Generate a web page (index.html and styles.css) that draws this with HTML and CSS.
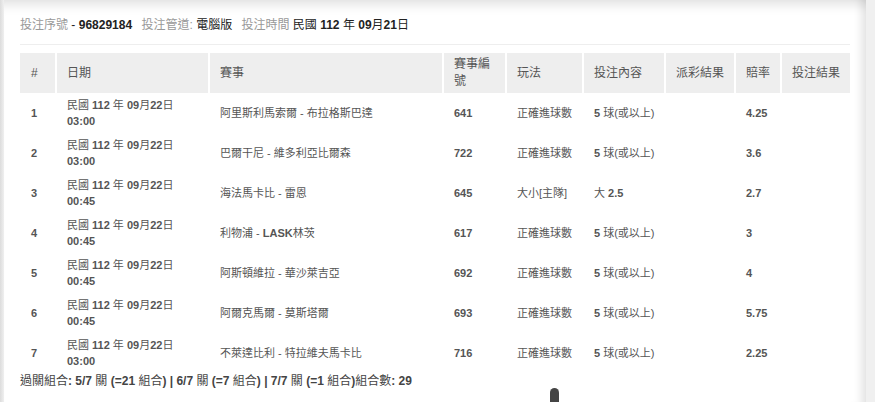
FILE: index.html
```html
<!DOCTYPE html>
<html lang="zh-Hant">
<head>
<meta charset="utf-8">
<title>投注明細</title>
<link rel="stylesheet" href="styles.css">
</head>
<body>
<div class="panel">
  <div class="info">
    <span class="lbl">投注序號</span> <span class="val">- <b>96829184</b></span>
    <span class="lbl">投注管道:</span> <span class="val">電腦版</span>
    <span class="lbl">投注時間</span> <span class="val">民國 <b>112</b> 年 <b>09</b>月<b>21</b>日</span>
  </div>
  <table class="bets">
    <colgroup>
      <col class="c-no"><col class="c-date"><col class="c-match"><col class="c-id"><col class="c-play"><col class="c-content"><col class="c-pay"><col class="c-odds"><col class="c-result">
    </colgroup>
    <thead>
      <tr><th>#</th><th>日期</th><th>賽事</th><th>賽事編號</th><th>玩法</th><th>投注內容</th><th>派彩結果</th><th>賠率</th><th>投注結果</th></tr>
    </thead>
    <tbody>
      <tr><td><b>1</b></td><td>民國 <b>112</b> 年 <b>09</b>月<b>22</b>日<br><b>03:00</b></td><td>阿里斯利馬索爾 - 布拉格斯巴達</td><td><b>641</b></td><td>正確進球數</td><td><b>5</b> 球(或以上)</td><td></td><td><b>4.25</b></td><td></td></tr>
      <tr><td><b>2</b></td><td>民國 <b>112</b> 年 <b>09</b>月<b>22</b>日<br><b>03:00</b></td><td>巴爾干尼 - 維多利亞比爾森</td><td><b>722</b></td><td>正確進球數</td><td><b>5</b> 球(或以上)</td><td></td><td><b>3.6</b></td><td></td></tr>
      <tr><td><b>3</b></td><td>民國 <b>112</b> 年 <b>09</b>月<b>22</b>日<br><b>00:45</b></td><td>海法馬卡比 - 雷恩</td><td><b>645</b></td><td>大小[主隊]</td><td>大 <b>2.5</b></td><td></td><td><b>2.7</b></td><td></td></tr>
      <tr><td><b>4</b></td><td>民國 <b>112</b> 年 <b>09</b>月<b>22</b>日<br><b>00:45</b></td><td>利物浦 - <b>LASK</b>林茨</td><td><b>617</b></td><td>正確進球數</td><td><b>5</b> 球(或以上)</td><td></td><td><b>3</b></td><td></td></tr>
      <tr><td><b>5</b></td><td>民國 <b>112</b> 年 <b>09</b>月<b>22</b>日<br><b>00:45</b></td><td>阿斯頓維拉 - 華沙萊吉亞</td><td><b>692</b></td><td>正確進球數</td><td><b>5</b> 球(或以上)</td><td></td><td><b>4</b></td><td></td></tr>
      <tr><td><b>6</b></td><td>民國 <b>112</b> 年 <b>09</b>月<b>22</b>日<br><b>00:45</b></td><td>阿爾克馬爾 - 莫斯塔爾</td><td><b>693</b></td><td>正確進球數</td><td><b>5</b> 球(或以上)</td><td></td><td><b>5.75</b></td><td></td></tr>
      <tr><td><b>7</b></td><td>民國 <b>112</b> 年 <b>09</b>月<b>22</b>日<br><b>03:00</b></td><td>不萊達比利 - 特拉維夫馬卡比</td><td><b>716</b></td><td>正確進球數</td><td><b>5</b> 球(或以上)</td><td></td><td><b>2.25</b></td><td></td></tr>
    </tbody>
  </table>
  <div class="footer">過關組合<b>: 5/7</b> 關 <b>(=21</b> 組合<b>) | 6/7</b> 關 <b>(=7</b> 組合<b>) | 7/7</b> 關 <b>(=1</b> 組合<b>)</b>組合數<b>: 29</b></div>
  <div class="thumb"></div>
</div>
</body>
</html>
```
FILE: styles.css
```css
html, body {
  margin: 0;
  padding: 0;
  height: 100%;
}
body {
  background: linear-gradient(to right, #dcdcdc 0, #f0f0f0 4px, #f0f0f0 100%);
  font-family: "Liberation Sans", Arial, "Noto Sans CJK TC", sans-serif;
  color: #555;
  overflow: hidden;
}
.panel {
  position: relative;
  margin-left: 4px;
  width: 862px;
  height: 402px;
  box-sizing: border-box;
  padding: 15px 16px 0 16px;
  background: #fff;
  box-shadow: inset 0 14px 12px -10px rgba(0, 0, 0, 0.13), inset -12px 0 10px -8px rgba(0, 0, 0, 0.12);
}
.info {
  font-size: 12px;
  line-height: 20px;
  padding: 0 0 9px 0;
  border-bottom: 1px solid #eee;
  color: #333;
  white-space: nowrap;
}
.info .lbl {
  color: #999;
}
.info .val {
  margin-right: 6px;
  color: #222;
}
.bets {
  margin-top: 8px;
  width: 830px;
  table-layout: fixed;
  border-collapse: separate;
  border-spacing: 0;
}
.c-no { width: 35px; }
.c-date { width: 153px; }
.c-match { width: 234px; }
.c-id { width: 63px; }
.c-play { width: 77px; }
.c-content { width: 82px; }
.c-pay { width: 70px; }
.c-odds { width: 46px; }
.c-result { width: 70px; }
.bets th {
  background: #eee;
  height: 40px;
  box-sizing: border-box;
  font-size: 12px;
  line-height: 17px;
  font-weight: normal;
  color: #555;
  text-align: left;
  padding: 0 6px 0 10px;
  border-left: 2px solid #fff;
}
.bets th:first-child,
.bets td:first-child {
  border-left: 0;
  padding-left: 11px;
}
.bets td {
  height: 40px;
  box-sizing: border-box;
  font-size: 11px;
  line-height: 16px;
  color: #555;
  padding: 0 6px 0 10px;
  border-left: 2px solid transparent;
  vertical-align: middle;
  white-space: nowrap;
}
.bets td b {
  color: #555;
}
.footer {
  font-size: 12px;
  line-height: 16px;
  color: #444;
  white-space: nowrap;
}
.thumb {
  position: absolute;
  left: 546px;
  top: 388px;
  width: 9px;
  height: 20px;
  border-radius: 5px 5px 0 0;
  background: #444;
}
```
